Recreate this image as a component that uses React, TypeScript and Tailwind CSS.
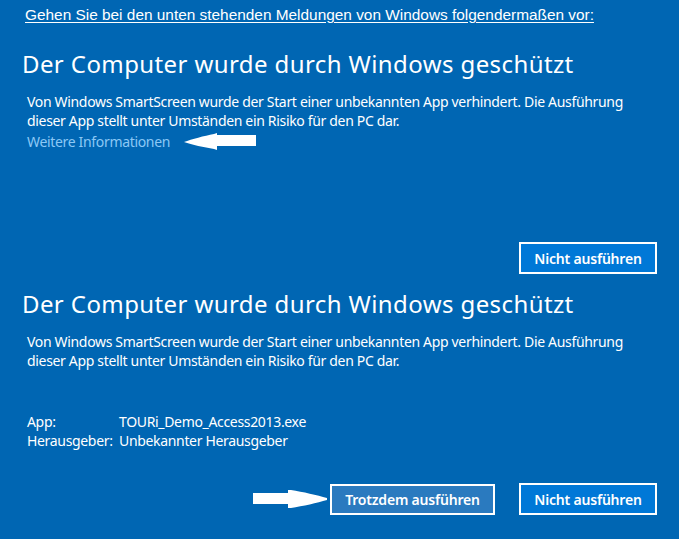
import React from "react";

const SEGOE = { fontFamily: '"Noto Sans", "Open Sans", sans-serif' };

function ArrowLeft() {
  return (
    <svg width="72" height="18" viewBox="0 0 72 18" aria-hidden>
      <path d="M0 9 C8 6 20 3 30 1 L33 0 L33 2 L72 2 L72 13 L33 13 L33 17 L30 16 C20 14 8 12 0 9 Z" fill="#fff" />
    </svg>
  );
}

function ArrowRight() {
  return (
    <svg width="74" height="18" viewBox="0 0 74 18" aria-hidden>
      <path d="M0 3 L35 3 L35 0 L38 0 C50 2 64 5 74 8 L74 10 C64 13 50 16 38 18 L35 18 L35 14 L0 14 Z" fill="#fff" />
    </svg>
  );
}

function Heading() {
  return (
    <h2 className="pl-[22px] text-[24px] leading-[32px] tracking-[0.4px] text-white">
      Der Computer wurde durch Windows geschützt
    </h2>
  );
}

function Body() {
  return (
    <p className="mt-[12px] pl-[27px] text-[14px] leading-[19px] tracking-[-0.33px] text-white">
      Von Windows SmartScreen wurde der Start einer unbekannten App verhindert. Die Ausführung
      <br />
      dieser App stellt unter Umständen ein Risiko für den PC dar.
    </p>
  );
}

function NichtButton() {
  return (
    <button className="h-[32px] w-[138px] border-2 border-white bg-[#0078d7] text-[14px] font-semibold tracking-[-0.2px] text-white">
      Nicht ausführen
    </button>
  );
}

export default function App() {
  return (
    <div className="h-[539px] w-[679px] overflow-hidden bg-[#0066b3] text-white" style={SEGOE}>
      <p
        className="pl-[25px] pt-[6px] text-[15.4px] leading-[18px] underline underline-offset-2"
        style={{ fontFamily: '"Liberation Sans", Arial, sans-serif' }}
      >
        Gehen Sie bei den unten stehenden Meldungen von Windows folgendermaßen vor:
      </p>

      <section className="flex h-[250px] flex-col pt-[24px]">
        <Heading />
        <Body />
        <div className="mt-[2px] flex items-center gap-[14px] pl-[27px]">
          <span className="text-[14px] leading-[19px] tracking-[-0.33px] text-[#8cc8f5]">Weitere Informationen</span>
          <ArrowLeft />
        </div>
        <div className="mt-auto flex justify-end pr-[22px]">
          <NichtButton />
        </div>
      </section>

      <section className="flex flex-col pt-[14px]">
        <Heading />
        <Body />
        <div className="mt-[42px] grid grid-cols-[92px_1fr] pl-[27px] text-[14px] leading-[19px] tracking-[-0.33px]">
          <span>App:</span>
          <span>TOURi_Demo_Access2013.exe</span>
          <span>Herausgeber:</span>
          <span>Unbekannter Herausgeber</span>
        </div>
        <div className="mt-[33px] flex items-center justify-end pr-[22px]">
          <ArrowRight />
          <button className="ml-[3px] mr-[24px] h-[31px] w-[165px] border-2 border-white bg-[#2a7abf] text-[14px] font-semibold tracking-[-0.2px] text-white">
            Trotzdem ausführen
          </button>
          <NichtButton />
        </div>
      </section>
    </div>
  );
}
